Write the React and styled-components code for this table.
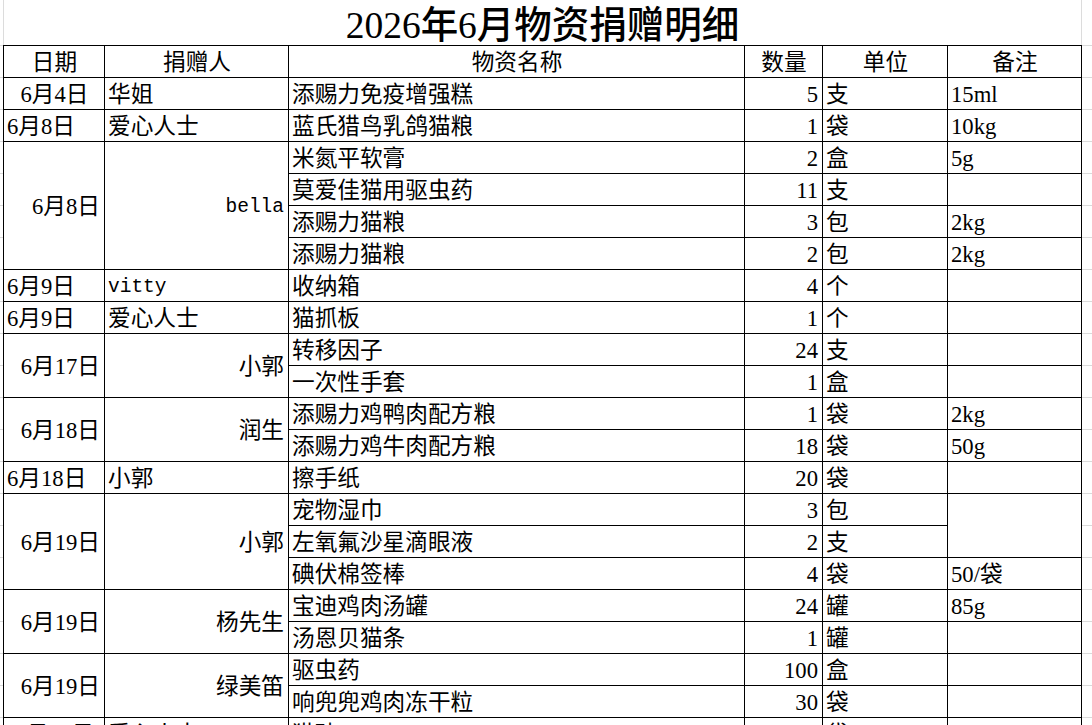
import styled, { createGlobalStyle } from "styled-components";

const GlobalStyle = createGlobalStyle`
  html, body {
    margin: 0;
    padding: 0;
    background: #fff;
  }
  body {
    font-family: "Liberation Serif", "Noto Sans CJK SC", serif;
    color: #000;
  }
`;

const groups = [
  { date: "6月4日", dateAlign: "center", donor: "华姐", donorAlign: "left",
    items: [{ name: "添赐力免疫增强糕", qty: 5, unit: "支", note: "15ml" }] },
  { date: "6月8日", dateAlign: "left", donor: "爱心人士", donorAlign: "left",
    items: [{ name: "蓝氏猎鸟乳鸽猫粮", qty: 1, unit: "袋", note: "10kg" }] },
  { date: "6月8日", dateAlign: "right", donor: "bella", donorAlign: "right", mono: true,
    items: [
      { name: "米氮平软膏", qty: 2, unit: "盒", note: "5g" },
      { name: "莫爱佳猫用驱虫药", qty: 11, unit: "支", note: "" },
      { name: "添赐力猫粮", qty: 3, unit: "包", note: "2kg" },
      { name: "添赐力猫粮", qty: 2, unit: "包", note: "2kg" },
    ] },
  { date: "6月9日", dateAlign: "left", donor: "vitty", donorAlign: "left", mono: true,
    items: [{ name: "收纳箱", qty: 4, unit: "个", note: "" }] },
  { date: "6月9日", dateAlign: "left", donor: "爱心人士", donorAlign: "left",
    items: [{ name: "猫抓板", qty: 1, unit: "个", note: "" }] },
  { date: "6月17日", dateAlign: "right", donor: "小郭", donorAlign: "right",
    items: [
      { name: "转移因子", qty: 24, unit: "支", note: "" },
      { name: "一次性手套", qty: 1, unit: "盒", note: "" },
    ] },
  { date: "6月18日", dateAlign: "right", donor: "润生", donorAlign: "right",
    items: [
      { name: "添赐力鸡鸭肉配方粮", qty: 1, unit: "袋", note: "2kg" },
      { name: "添赐力鸡牛肉配方粮", qty: 18, unit: "袋", note: "50g" },
    ] },
  { date: "6月18日", dateAlign: "left", donor: "小郭", donorAlign: "left",
    items: [{ name: "擦手纸", qty: 20, unit: "袋", note: "" }] },
  { date: "6月19日", dateAlign: "right", donor: "小郭", donorAlign: "right",
    items: [
      { name: "宠物湿巾", qty: 3, unit: "包", note: "", noteSpan: 2 },
      { name: "左氧氟沙星滴眼液", qty: 2, unit: "支", note: null },
      { name: "碘伏棉签棒", qty: 4, unit: "袋", note: "50/袋" },
    ] },
  { date: "6月19日", dateAlign: "right", donor: "杨先生", donorAlign: "right",
    items: [
      { name: "宝迪鸡肉汤罐", qty: 24, unit: "罐", note: "85g" },
      { name: "汤恩贝猫条", qty: 1, unit: "罐", note: "" },
    ] },
  { date: "6月19日", dateAlign: "right", donor: "绿美笛", donorAlign: "right",
    items: [
      { name: "驱虫药", qty: 100, unit: "盒", note: "" },
      { name: "响兜兜鸡肉冻干粒", qty: 30, unit: "袋", note: "" },
    ] },
  { date: "6月20日", dateAlign: "center", donor: "爱心人士", donorAlign: "left",
    items: [{ name: "猫砂", qty: 2, unit: "袋", note: "" }] },
];

const headers = ["日期", "捐赠人", "物资名称", "数量", "单位", "备注"];

export default function App() {
  return (
    <>
      <GlobalStyle />
      <Page>
        <TitleBar>
          <Title>2026年6月物资捐赠明细</Title>
        </TitleBar>
        <Sheet>
          {headers.map((h) => (
            <HeadCell key={h}>{h}</HeadCell>
          ))}
          {groups.map((g, gi) =>
            g.items.map((it, i) => (
              <Row key={`${gi}-${i}`}>
                {i === 0 && (
                  <>
                    <Cell $align={g.dateAlign} $span={g.items.length}>{g.date}</Cell>
                    <Cell $align={g.donorAlign} $span={g.items.length}>
                      {g.mono ? <Mono>{g.donor}</Mono> : g.donor}
                    </Cell>
                  </>
                )}
                <Cell $align="left">{it.name}</Cell>
                <Cell $align="right">{it.qty}</Cell>
                <Cell $align="left">{it.unit}</Cell>
                {it.note !== null && (
                  <Cell $align="left" $span={it.noteSpan || 1}>{it.note}</Cell>
                )}
              </Row>
            ))
          )}
        </Sheet>
      </Page>
    </>
  );
}

const Page = styled.div`
  width: 1092px;
  height: 725px;
  overflow: hidden;
  background: repeating-linear-gradient(
    to bottom,
    transparent 0 13px,
    #dadada 13px 14px,
    transparent 14px 32px
  );
`;

const TitleBar = styled.div`
  height: 45px;
  background: #fff;
`;

const Title = styled.div`
  box-sizing: border-box;
  margin-left: 3px;
  width: 1079px;
  height: 100%;
  padding-top: 6px;
  border-left: 1px solid #dcdcdc;
  border-right: 1px solid #dcdcdc;
  display: flex;
  align-items: center;
  justify-content: center;
  font-size: 37.5px;
  font-weight: 500;
  line-height: 1;
`;

const Sheet = styled.div`
  box-sizing: border-box;
  margin-left: 3px;
  width: 1079px;
  display: grid;
  grid-template-columns: 100px 183px 455px 77px 124px 133px;
  grid-auto-rows: 31px;
  gap: 1px;
  padding: 1px;
  background: #000;
`;

const Row = styled.div`
  display: contents;
`;

const justify = { left: "flex-start", center: "center", right: "flex-end" };

const Cell = styled.div`
  grid-row: span ${(p) => p.$span || 1};
  background: #fff;
  display: flex;
  align-items: center;
  justify-content: ${(p) => justify[p.$align] || "flex-start"};
  padding: 4px ${(p) => (p.$align === "right" ? "4px" : "3px")} 0
    ${(p) => (p.$align === "left" ? "3px" : "4px")};
  font-size: 22.67px;
  line-height: 1;
  white-space: nowrap;
  overflow: hidden;
`;

const HeadCell = styled(Cell)`
  justify-content: center;
`;

const Mono = styled.span`
  font-family: "Liberation Mono", "DejaVu Sans Mono", monospace;
  font-size: 19.5px;
`;
